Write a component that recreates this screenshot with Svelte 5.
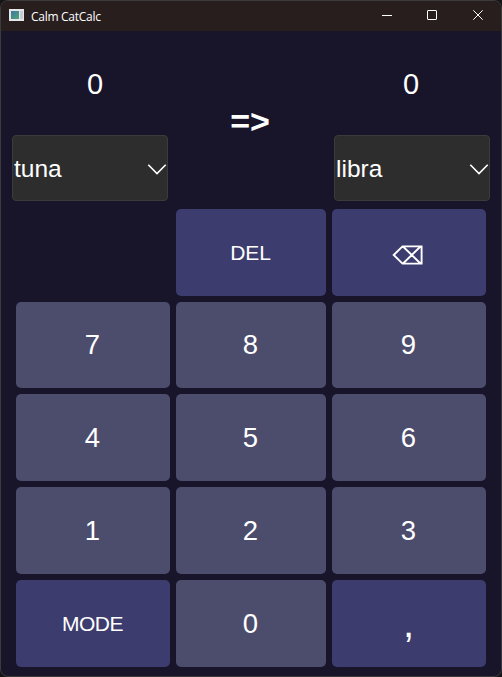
<script>
  const keys = [
    { label: '', kind: 'empty' },
    { label: 'DEL', kind: 'action word' },
    { label: '⌫', kind: 'action', icon: true },
    ...['7', '8', '9', '4', '5', '6', '1', '2', '3'].map((label) => ({ label, kind: 'digit' })),
    { label: 'MODE', kind: 'action word mode' },
    { label: '0', kind: 'digit' },
    { label: ',', kind: 'action comma' },
  ];
</script>

{#snippet unit(value, name)}
  <div class="unit">
    <div class="value">{value}</div>
    <button class="select">
      <span>{name}</span>
      <svg width="20" height="12" viewBox="0 0 20 12" fill="none" stroke="#fff" stroke-width="1.6">
        <path d="M1.3 1.8 10 10.6 18.7 1.8" />
      </svg>
    </button>
  </div>
{/snippet}

<div class="window">
  <header>
    <svg class="logo" width="15" height="12" viewBox="0 0 15 12">
      <defs>
        <linearGradient id="screen" x1="0" y1="0" x2="1" y2="1">
          <stop offset="0" stop-color="#3f78a8" />
          <stop offset="1" stop-color="#4fa572" />
        </linearGradient>
      </defs>
      <rect width="15" height="12" fill="#e4e6e8" />
      <rect x="2" y="2" width="8" height="8" fill="url(#screen)" />
      <rect x="11" y="2" width="3" height="8" fill="#c5ccd5" />
    </svg>
    <span class="title">Calm CatCalc</span>
    <div class="controls">
      <svg width="46" height="30" viewBox="0 0 46 30" fill="none" stroke="#fff"><path d="M18 14.5h10" /></svg>
      <svg width="46" height="30" viewBox="0 0 46 30" fill="none" stroke="#fff"><rect x="17.5" y="9.5" width="9" height="9" rx=".5" /></svg>
      <svg width="46" height="30" viewBox="0 0 46 30" fill="none" stroke="#fff"><path d="m17.3 9.3 9.4 9.4m0-9.4-9.4 9.4" /></svg>
    </div>
  </header>

  <section class="display">
    {@render unit('0', 'tuna')}
    <div class="arrow">=&gt;</div>
    {@render unit('0', 'libra')}
  </section>

  <section class="pad">
    {#each keys as key}
      {#if key.kind === 'empty'}
        <div></div>
      {:else}
        <button class="key {key.kind}">
          {#if key.icon}
            <svg width="32" height="20" viewBox="0 0 32 20" fill="none" stroke="#fff" stroke-width="1.9" role="img" aria-label="Backspace">
              <path d="M1.7 10 10.5 1.4H29.6V18.6H10.5Z M11 1.5 28.5 18.5M28.5 1.5 11 18.5" />
            </svg>
          {:else}
            <span>{key.label}</span>
          {/if}
        </button>
      {/if}
    {/each}
  </section>
</div>

<style>
  :global(body) {
    margin: 0;
    background: #151515;
  }
  .window {
    box-sizing: border-box;
    width: 502px;
    height: 677px;
    border: 1px solid #3b3b3c;
    border-radius: 8px;
    overflow: hidden;
    background: #18152b;
    color: #fff;
    font-family: 'Liberation Sans', Arial, sans-serif;
    display: flex;
    flex-direction: column;
  }
  header {
    height: 30px;
    flex: none;
    display: flex;
    align-items: center;
    padding-left: 8px;
    background: #281e1e;
  }
  .logo {
    margin-top: -2px;
  }
  .title {
    margin: 0 0 0 7px;
    font: 12px 'Open Sans', 'Noto Sans', sans-serif;
    letter-spacing: -0.28px;
  }
  .controls {
    display: flex;
    margin-left: auto;
    margin-right: -1px;
  }
  button {
    border: 0;
    padding: 0;
    color: inherit;
    font-family: inherit;
  }
  .display {
    display: grid;
    grid-template-columns: 156px 1fr 156px;
    height: 170px;
    padding: 0 11px;
  }
  .unit {
    display: flex;
    flex-direction: column;
  }
  .value {
    height: 104px;
    line-height: 106px;
    padding-left: 10px;
    text-align: center;
    font-size: 29px;
    box-sizing: border-box;
  }
  .unit:last-child .value {
    padding-left: 0;
    padding-right: 2px;
  }
  .select {
    box-sizing: border-box;
    height: 66px;
    border: 1px solid #3b3b3a;
    border-radius: 4px;
    background: #2d2d2d;
    display: flex;
    align-items: center;
    justify-content: space-between;
    padding: 1px 0 0 1px;
    font-size: 24.5px;
  }
  .arrow {
    text-align: center;
    font-size: 34px;
    font-weight: 700;
    line-height: 180px;
    padding-right: 2px;
  }
  .pad {
    display: grid;
    grid-template-columns: 154px 150px 154px;
    grid-template-rows: 87px 86px 87px 87px 87px;
    gap: 6px;
    padding: 8px 0 0 15px;
  }
  .key {
    display: flex;
    align-items: center;
    justify-content: center;
    border-radius: 5px;
    font-size: 27.5px;
  }
  .digit {
    background: #4c4c6d;
    padding-right: 1px;
  }
  .action {
    background: #3d3c6e;
  }
  .word {
    font-size: 21px;
    letter-spacing: -0.2px;
    padding-right: 1px;
  }
  .mode {
    letter-spacing: -0.5px;
  }
  .key svg {
    margin: 4px 2px 0 0;
  }
  .comma {
    font-size: 40px;
    padding: 0 1px 1px 0;
  }
</style>
